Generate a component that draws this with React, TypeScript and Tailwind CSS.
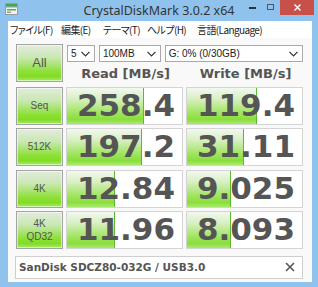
import { Fragment } from 'react';

type Row = {
  label: string[];
  read: string;
  write: string;
  readBar: number;
  writeBar: number;
};

const rows: Row[] = [
  { label: ['Seq'], read: '258.4', write: '119.4', readBar: 77, writeBar: 70 },
  { label: ['512K'], read: '197.2', write: '31.11', readBar: 75, writeBar: 57 },
  { label: ['4K'], read: '12.84', write: '9.025', readBar: 48, writeBar: 44 },
  { label: ['4K', 'QD32'], read: '11.96', write: '8.093', readBar: 48, writeBar: 44 },
];

const menu = [
  { text: 'ファイル(F)', w: 'w-[51px]' },
  { text: '編集(E)', w: 'w-[42px]' },
  { text: 'テーマ(T)', w: 'w-[44px]' },
  { text: 'ヘルプ(H)', w: 'w-[50px]' },
  { text: '言語(Language)', w: 'w-[80px]' },
];

function Chevron() {
  return (
    <svg width="9" height="6" viewBox="0 0 9 6" className="shrink-0">
      <polyline points="0.5,0.8 4.5,5 8.5,0.8" fill="none" stroke="#333" strokeWidth="1.2" />
    </svg>
  );
}

function Select({ text, w }: { text: string; w: string }) {
  return (
    <div className={`${w} h-[17px] border border-[#a9a9a9] bg-white flex items-center justify-between pl-[3px] pr-[4px]`}>
      <span className="text-[10px] leading-none text-[#222] font-['Liberation_Sans',sans-serif]">{text}</span>
      <Chevron />
    </div>
  );
}

function GreenButton({ children, className = '' }: { children: React.ReactNode; className?: string }) {
  return (
    <div
      className={`border border-[#a3a3a3] bg-[linear-gradient(to_bottom,#e2ebdd_0%,#c9e8b2_35%,#8be034_75%,#82dc26_88%,#a6ea6a_100%)] shadow-[inset_0_0_0_1px_rgba(255,255,255,0.55)] flex flex-col items-center justify-center text-[#555] font-['Liberation_Sans',sans-serif] ${className}`}
    >
      {children}
    </div>
  );
}

function ValueBox({ value, bar }: { value: string; bar: number }) {
  return (
    <div className="relative h-full border border-[#d4d4d4] bg-white overflow-hidden">
      <div
        className="absolute left-0 top-0 bottom-0 border-r border-[#5fb82e] bg-[linear-gradient(to_bottom,#f3f8ef_0%,#d8f0c4_30%,#9fe45c_70%,#8ade3c_88%,#a9ea70_100%)]"
        style={{ width: bar }}
      />
      <div className="relative h-full flex items-center justify-end pr-[7px] text-[31px] font-bold leading-none text-[#555] font-['DejaVu_Sans',sans-serif]">
        {value}
      </div>
    </div>
  );
}

export default function App() {
  return (
    <div className="w-[318px] h-[287px] bg-[#8fc3ee] flex flex-col overflow-hidden">
      {/* title bar */}
      <div className="relative h-[21px] shrink-0 flex items-center">
        <svg width="13" height="12" viewBox="0 0 13 12" className="absolute left-[5px] top-[3px]">
          <rect x="0.5" y="0.5" width="12" height="3" fill="#3fae3f" />
          <rect x="0.5" y="4" width="12" height="7.5" fill="#f2f2f2" stroke="#8a8a8a" strokeWidth="0.8" />
          <rect x="2" y="6" width="9" height="1.5" fill="#48b848" />
          <rect x="2" y="8.5" width="4" height="1.5" fill="#9a9a9a" />
        </svg>
        <div className="w-full text-center text-[12.5px] leading-none text-[#333] font-['Noto_Sans',sans-serif] pt-[1px]">
          CrystalDiskMark 3.0.2 x64
        </div>
        <div className="absolute left-[249px] top-[7px] w-[7px] h-[1.5px] bg-[#333]" />
        <div className="absolute left-[267px] top-[4px] w-[7px] h-[6px] border border-[#555]" />
        <div className="absolute left-[280px] top-0 w-[34px] h-[15px] bg-[#c7514a] flex items-center justify-center">
          <svg width="7" height="7" viewBox="0 0 7 7">
            <path d="M0.5 0.5 L6.5 6.5 M6.5 0.5 L0.5 6.5" stroke="#fff" strokeWidth="1.4" />
          </svg>
        </div>
      </div>

      {/* client */}
      <div className="ml-[8px] mr-[6px] mb-[5px] flex-1 bg-[#f9f9f9] flex flex-col">
        <div className="h-[17px] bg-white flex items-center pl-[2px] text-[10px] leading-none tracking-[-0.6px] text-[#222] font-['Noto_Sans_CJK_JP',sans-serif] [font-feature-settings:'palt']">
          {menu.map(m => (
            <span key={m.text} className={`${m.w} min-w-0 shrink-0 whitespace-nowrap`}>{m.text}</span>
          ))}
        </div>

        <div className="pl-[8px] pt-[6px] grid grid-cols-[47px_117px_117px] gap-x-[3px]">
          <GreenButton className="row-span-2 h-[38px] text-[13px]">All</GreenButton>
          <div className="col-span-2 flex items-center gap-[4px] pl-[1px] pt-[1px]">
            <Select text="5" w="w-[28px]" />
            <Select text="100MB" w="w-[62px]" />
            <Select text="G: 0% (0/30GB)" w="w-[139px]" />
          </div>
          <div className="flex items-center justify-center text-[13px] font-bold text-[#555] font-['DejaVu_Sans',sans-serif] pt-[2px] pl-[2px]">
            Read [MB/s]
          </div>
          <div className="flex items-center justify-center text-[13px] font-bold text-[#555] font-['DejaVu_Sans',sans-serif] pt-[2px] pl-[2px]">
            Write [MB/s]
          </div>

          {rows.map((r, i) => (
            <Fragment key={r.read}>
              <GreenButton className={`h-[38px] text-[10px] leading-[13px] ${i === 2 ? 'mt-[4px]' : 'mt-[3px]'}`}>
                {r.label.map(l => <span key={l}>{l}</span>)}
              </GreenButton>
              <div className={`h-[38px] ${i === 2 ? 'mt-[4px]' : 'mt-[3px]'}`}>
                <ValueBox value={r.read} bar={r.readBar} />
              </div>
              <div className={`h-[38px] ${i === 2 ? 'mt-[4px]' : 'mt-[3px]'}`}>
                <ValueBox value={r.write} bar={r.writeBar} />
              </div>
            </Fragment>
          ))}
        </div>

        <div className="ml-[7px] mr-[9px] mt-[7px] h-[23px] border border-[#cfcfcf] bg-white flex items-center justify-between pl-[3px] pr-[7px]">
          <span className="text-[10.5px] font-bold text-[#555] font-['DejaVu_Sans',sans-serif] leading-none">
            SanDisk SDCZ80-032G / USB3.0
          </span>
          <svg width="10" height="10" viewBox="0 0 10 10">
            <path d="M1 1 L9 9 M9 1 L1 9" stroke="#555" strokeWidth="1.6" />
          </svg>
        </div>
      </div>
    </div>
  );
}
